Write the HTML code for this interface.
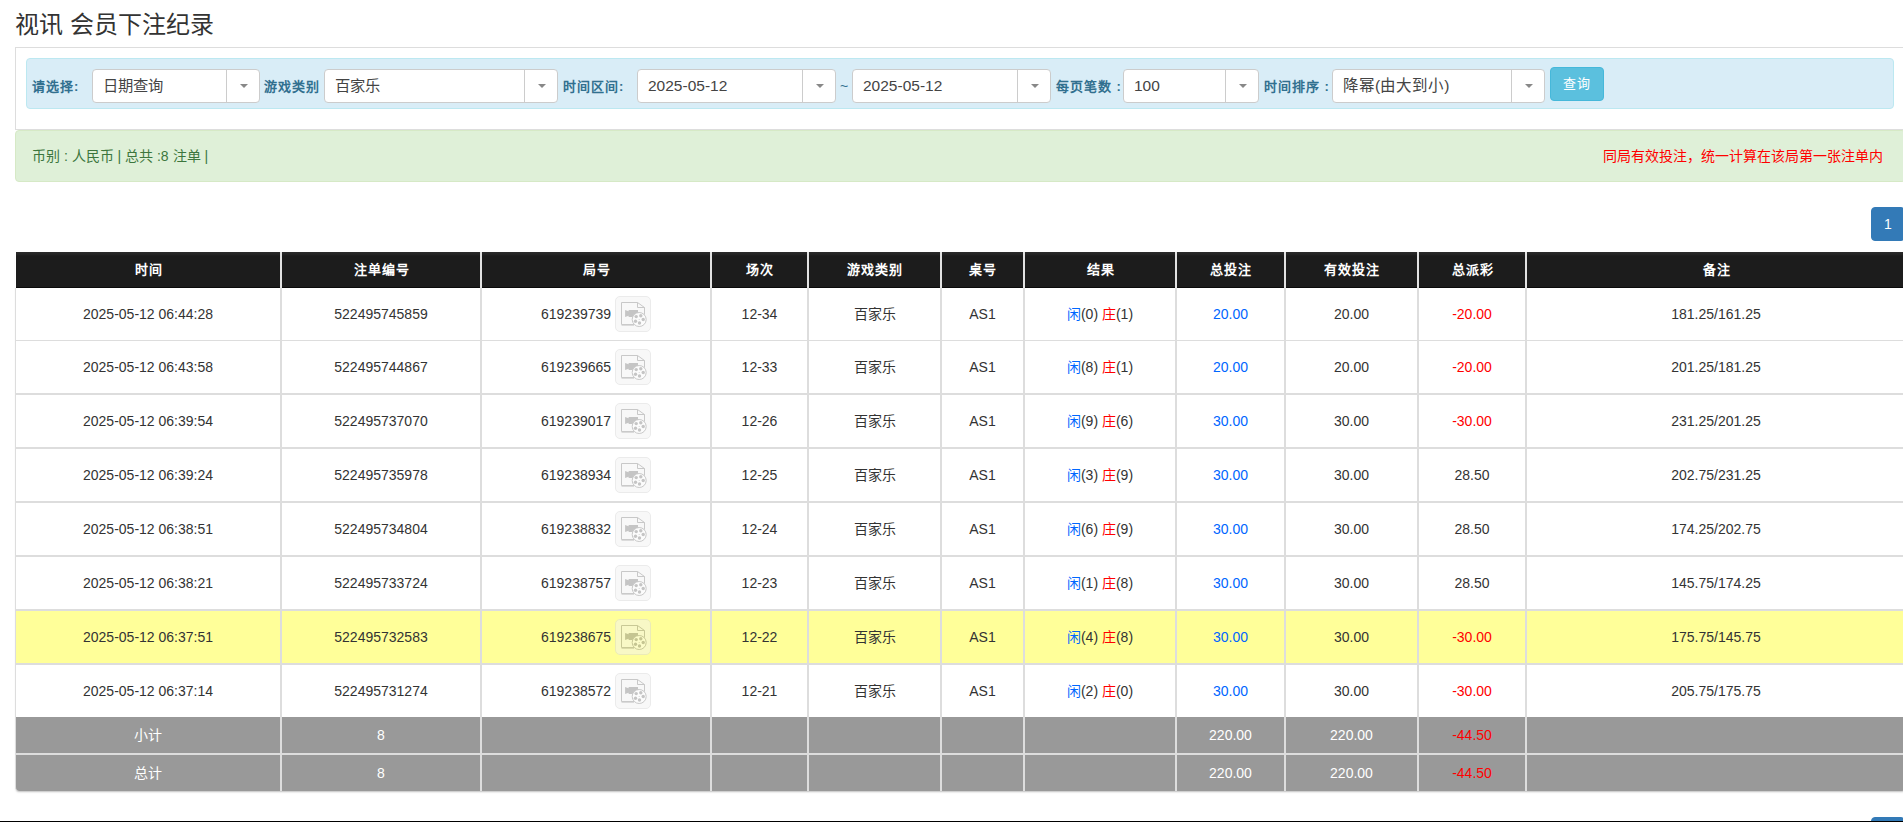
<!DOCTYPE html>
<html lang="zh-CN"><head><meta charset="utf-8"><title>会员下注纪录</title>
<style>
*{box-sizing:border-box;margin:0;padding:0}
html,body{width:1903px;height:822px;overflow:hidden;background:#fff}
body{font-family:"Liberation Sans",sans-serif;font-size:14px;color:#333;position:relative;line-height:20px}
.title{position:absolute;left:15px;top:9px;font-size:24px;line-height:32px;color:#333;font-weight:normal;white-space:nowrap}
.panel{position:absolute;left:15px;top:47px;width:1891px;height:83px;border:1px solid #ddd;background:#fff}
.bar{position:absolute;left:10px;top:10px;width:1868px;height:51px;background:#d9edf7;border:1px solid #bce8f1;border-radius:4px}
.lbl{position:absolute;top:20px;color:#31708f;font-weight:bold;font-size:13px;letter-spacing:1px;line-height:16px;white-space:nowrap}
.sel{position:absolute;top:10px;height:34px;background:#fff;border:1px solid #ccc;border-radius:4px;font-size:15.5px;line-height:32px;color:#444;padding-left:10px;white-space:nowrap}
.sel .sep{position:absolute;right:32px;top:0;bottom:0;width:1px;background:#ccc}
.sel .car{position:absolute;right:11px;top:14px;width:0;height:0;border-style:solid;border-width:4px 4px 0 4px;border-color:#888 transparent transparent transparent}
.tilde{position:absolute;top:17px;color:#31708f;font-size:14px}
.btn{position:absolute;left:1523px;top:8px;width:54px;height:34px;background:#5bc0de;border:1px solid #46b8da;border-radius:4px;color:#fff;font-size:13px;letter-spacing:1px;text-indent:-1px;line-height:31px;text-align:center}
.alert{position:absolute;left:15px;top:130px;width:1891px;height:52px;background:#dff0d8;border:1px solid #d6e9c6;border-radius:4px;color:#3c763d;font-size:14px}
.alert .l{position:absolute;left:16px;top:15px;line-height:20px;white-space:nowrap}
.alert .r{position:absolute;right:22px;top:15px;line-height:20px;color:#f00;white-space:nowrap}
.pg{position:absolute;left:1871px;top:207px;width:34px;height:34px;background:#337ab7;border:1px solid #337ab7;border-radius:4px;color:#fff;text-align:center;line-height:32px;font-size:14px}
.pg2{top:817px}
.botline{position:absolute;left:0;top:821px;width:1903px;height:1px;background:#000}
table.t{position:absolute;left:15px;top:252px;border-collapse:separate;border-spacing:0;table-layout:fixed;width:1891px;border-radius:0 0 4px 4px;box-shadow:0 2px 2px -1px rgba(0,0,0,.25)}
.t th{height:36px;background:linear-gradient(#2b2b2b 0,#262626 2px,#1c1c1c 4px,#1c1c1c 35px,#0a0a0a 35px);color:#fff;font-weight:900;font-size:13px;letter-spacing:1px;text-indent:1px;border-left:1px solid #e2e2e2;border-right:1px solid #e2e2e2;padding:0;text-align:center;line-height:20px}
.t th:first-child{border-left:1px solid #fff}
.t td{text-align:center;padding:0;border-left:1px solid #ddd;border-right:1px solid #ddd;white-space:nowrap;background:#fff}
.t tr.r1 td{height:53px;border-bottom:1px solid #ddd}
.t tr.rn td{height:54px;border-bottom:2px solid #ddd}
.t tr.last td{height:52px;border-bottom:0}
.t tr.hl td{background:#ffff99}
.t tr.g td{background:#999;color:#fff;height:38px;border-bottom:2px solid #ddd}
.t tr.g2 td{height:36px;border-bottom:0}
.t tr.g2 td:first-child{border-bottom-left-radius:4px}
.t tr.g2 td:last-child{border-bottom-right-radius:4px}
.red{color:#f00}
.blue{color:#06f}
.t tr.g td.red{color:#f00}
.vi{display:inline-block;vertical-align:-13px;width:36px;height:36px;border:1px solid #d8d8d8;border-radius:5px;background:#f3f3f3;opacity:.5}
.vi svg{display:block}
</style></head><body>
<h3 class="title">视讯 会员下注纪录</h3>
<div class="panel">
 <div class="bar">
  <span class="lbl" style="left:5px">请选择:</span>
  <div class="sel" style="left:65px;width:168px;font-size:15.3px">日期查询<span class="sep"></span><span class="car"></span></div>
  <span class="lbl" style="left:237px">游戏类别</span>
  <div class="sel" style="left:297px;width:234px;font-size:15.3px">百家乐<span class="sep"></span><span class="car"></span></div>
  <span class="lbl" style="left:536px">时间区间:</span>
  <div class="sel" style="left:610px;width:199px">2025-05-12<span class="sep"></span><span class="car"></span></div>
  <span class="tilde" style="left:813px">~</span>
  <div class="sel" style="left:825px;width:199px">2025-05-12<span class="sep"></span><span class="car"></span></div>
  <span class="lbl" style="left:1029px">每页笔数 :</span>
  <div class="sel" style="left:1096px;width:136px">100<span class="sep"></span><span class="car"></span></div>
  <span class="lbl" style="left:1237px">时间排序 :</span>
  <div class="sel" style="left:1305px;width:213px">降幂(由大到小)<span class="sep"></span><span class="car"></span></div>
  <div class="btn">查询</div>
 </div>
</div>
<div class="alert"><span class="l">币别 : 人民币 | 总共 :8 注单 |</span><span class="r">同局有效投注，统一计算在该局第一张注单内</span></div>
<div class="pg">1</div>
<table class="t">
<colgroup><col style="width:266px"><col style="width:200px"><col style="width:230px"><col style="width:97px"><col style="width:133px"><col style="width:83px"><col style="width:152px"><col style="width:109px"><col style="width:133px"><col style="width:108px"><col style="width:380px"></colgroup>
<thead><tr><th>时间</th><th>注单编号</th><th>局号</th><th>场次</th><th>游戏类别</th><th>桌号</th><th>结果</th><th>总投注</th><th>有效投注</th><th>总派彩</th><th>备注</th></tr></thead>
<tbody>
<tr class="r1"><td>2025-05-12 06:44:28</td><td>522495745859</td><td>619239739 <span class="vi"><svg width="34" height="34" viewBox="0 0 34 34"><path d="M18.3 27.5H5.5V5.5H21.5L28.5 10.5V17.9" fill="none" stroke="#939393" stroke-width="1"/><path d="M5.5 28.3H18" stroke="#aaa" stroke-width="1"/><path d="M21.5 5.5V10.5H28.5" fill="none" stroke="#939393" stroke-width="1"/><path d="M9.1 13L12.6 14.2V13H22V20H12.6V18.8L9.1 20Z" fill="#8d8d8d"/><circle cx="23.2" cy="22.5" r="7" fill="#fafafa" stroke="#939393" stroke-width="1"/><circle cx="20.2" cy="19.6" r="1.7" fill="#8d8d8d"/><circle cx="24.8" cy="18.7" r="1.7" fill="#8d8d8d"/><circle cx="27.2" cy="22.5" r="1.7" fill="#8d8d8d"/><circle cx="19.5" cy="24.2" r="1.7" fill="#8d8d8d"/><circle cx="23.5" cy="26" r="1.7" fill="#8d8d8d"/><circle cx="23.2" cy="22.5" r="0.6" fill="#aaa"/></svg></span></td><td>12-34</td><td>百家乐</td><td>AS1</td><td><span class="blue">闲</span>(0) <span class="red">庄</span>(1)</td><td class="blue">20.00</td><td>20.00</td><td class="red">-20.00</td><td>181.25/161.25</td></tr>
<tr class="rn"><td>2025-05-12 06:43:58</td><td>522495744867</td><td>619239665 <span class="vi"><svg width="34" height="34" viewBox="0 0 34 34"><path d="M18.3 27.5H5.5V5.5H21.5L28.5 10.5V17.9" fill="none" stroke="#939393" stroke-width="1"/><path d="M5.5 28.3H18" stroke="#aaa" stroke-width="1"/><path d="M21.5 5.5V10.5H28.5" fill="none" stroke="#939393" stroke-width="1"/><path d="M9.1 13L12.6 14.2V13H22V20H12.6V18.8L9.1 20Z" fill="#8d8d8d"/><circle cx="23.2" cy="22.5" r="7" fill="#fafafa" stroke="#939393" stroke-width="1"/><circle cx="20.2" cy="19.6" r="1.7" fill="#8d8d8d"/><circle cx="24.8" cy="18.7" r="1.7" fill="#8d8d8d"/><circle cx="27.2" cy="22.5" r="1.7" fill="#8d8d8d"/><circle cx="19.5" cy="24.2" r="1.7" fill="#8d8d8d"/><circle cx="23.5" cy="26" r="1.7" fill="#8d8d8d"/><circle cx="23.2" cy="22.5" r="0.6" fill="#aaa"/></svg></span></td><td>12-33</td><td>百家乐</td><td>AS1</td><td><span class="blue">闲</span>(8) <span class="red">庄</span>(1)</td><td class="blue">20.00</td><td>20.00</td><td class="red">-20.00</td><td>201.25/181.25</td></tr>
<tr class="rn"><td>2025-05-12 06:39:54</td><td>522495737070</td><td>619239017 <span class="vi"><svg width="34" height="34" viewBox="0 0 34 34"><path d="M18.3 27.5H5.5V5.5H21.5L28.5 10.5V17.9" fill="none" stroke="#939393" stroke-width="1"/><path d="M5.5 28.3H18" stroke="#aaa" stroke-width="1"/><path d="M21.5 5.5V10.5H28.5" fill="none" stroke="#939393" stroke-width="1"/><path d="M9.1 13L12.6 14.2V13H22V20H12.6V18.8L9.1 20Z" fill="#8d8d8d"/><circle cx="23.2" cy="22.5" r="7" fill="#fafafa" stroke="#939393" stroke-width="1"/><circle cx="20.2" cy="19.6" r="1.7" fill="#8d8d8d"/><circle cx="24.8" cy="18.7" r="1.7" fill="#8d8d8d"/><circle cx="27.2" cy="22.5" r="1.7" fill="#8d8d8d"/><circle cx="19.5" cy="24.2" r="1.7" fill="#8d8d8d"/><circle cx="23.5" cy="26" r="1.7" fill="#8d8d8d"/><circle cx="23.2" cy="22.5" r="0.6" fill="#aaa"/></svg></span></td><td>12-26</td><td>百家乐</td><td>AS1</td><td><span class="blue">闲</span>(9) <span class="red">庄</span>(6)</td><td class="blue">30.00</td><td>30.00</td><td class="red">-30.00</td><td>231.25/201.25</td></tr>
<tr class="rn"><td>2025-05-12 06:39:24</td><td>522495735978</td><td>619238934 <span class="vi"><svg width="34" height="34" viewBox="0 0 34 34"><path d="M18.3 27.5H5.5V5.5H21.5L28.5 10.5V17.9" fill="none" stroke="#939393" stroke-width="1"/><path d="M5.5 28.3H18" stroke="#aaa" stroke-width="1"/><path d="M21.5 5.5V10.5H28.5" fill="none" stroke="#939393" stroke-width="1"/><path d="M9.1 13L12.6 14.2V13H22V20H12.6V18.8L9.1 20Z" fill="#8d8d8d"/><circle cx="23.2" cy="22.5" r="7" fill="#fafafa" stroke="#939393" stroke-width="1"/><circle cx="20.2" cy="19.6" r="1.7" fill="#8d8d8d"/><circle cx="24.8" cy="18.7" r="1.7" fill="#8d8d8d"/><circle cx="27.2" cy="22.5" r="1.7" fill="#8d8d8d"/><circle cx="19.5" cy="24.2" r="1.7" fill="#8d8d8d"/><circle cx="23.5" cy="26" r="1.7" fill="#8d8d8d"/><circle cx="23.2" cy="22.5" r="0.6" fill="#aaa"/></svg></span></td><td>12-25</td><td>百家乐</td><td>AS1</td><td><span class="blue">闲</span>(3) <span class="red">庄</span>(9)</td><td class="blue">30.00</td><td>30.00</td><td>28.50</td><td>202.75/231.25</td></tr>
<tr class="rn"><td>2025-05-12 06:38:51</td><td>522495734804</td><td>619238832 <span class="vi"><svg width="34" height="34" viewBox="0 0 34 34"><path d="M18.3 27.5H5.5V5.5H21.5L28.5 10.5V17.9" fill="none" stroke="#939393" stroke-width="1"/><path d="M5.5 28.3H18" stroke="#aaa" stroke-width="1"/><path d="M21.5 5.5V10.5H28.5" fill="none" stroke="#939393" stroke-width="1"/><path d="M9.1 13L12.6 14.2V13H22V20H12.6V18.8L9.1 20Z" fill="#8d8d8d"/><circle cx="23.2" cy="22.5" r="7" fill="#fafafa" stroke="#939393" stroke-width="1"/><circle cx="20.2" cy="19.6" r="1.7" fill="#8d8d8d"/><circle cx="24.8" cy="18.7" r="1.7" fill="#8d8d8d"/><circle cx="27.2" cy="22.5" r="1.7" fill="#8d8d8d"/><circle cx="19.5" cy="24.2" r="1.7" fill="#8d8d8d"/><circle cx="23.5" cy="26" r="1.7" fill="#8d8d8d"/><circle cx="23.2" cy="22.5" r="0.6" fill="#aaa"/></svg></span></td><td>12-24</td><td>百家乐</td><td>AS1</td><td><span class="blue">闲</span>(6) <span class="red">庄</span>(9)</td><td class="blue">30.00</td><td>30.00</td><td>28.50</td><td>174.25/202.75</td></tr>
<tr class="rn"><td>2025-05-12 06:38:21</td><td>522495733724</td><td>619238757 <span class="vi"><svg width="34" height="34" viewBox="0 0 34 34"><path d="M18.3 27.5H5.5V5.5H21.5L28.5 10.5V17.9" fill="none" stroke="#939393" stroke-width="1"/><path d="M5.5 28.3H18" stroke="#aaa" stroke-width="1"/><path d="M21.5 5.5V10.5H28.5" fill="none" stroke="#939393" stroke-width="1"/><path d="M9.1 13L12.6 14.2V13H22V20H12.6V18.8L9.1 20Z" fill="#8d8d8d"/><circle cx="23.2" cy="22.5" r="7" fill="#fafafa" stroke="#939393" stroke-width="1"/><circle cx="20.2" cy="19.6" r="1.7" fill="#8d8d8d"/><circle cx="24.8" cy="18.7" r="1.7" fill="#8d8d8d"/><circle cx="27.2" cy="22.5" r="1.7" fill="#8d8d8d"/><circle cx="19.5" cy="24.2" r="1.7" fill="#8d8d8d"/><circle cx="23.5" cy="26" r="1.7" fill="#8d8d8d"/><circle cx="23.2" cy="22.5" r="0.6" fill="#aaa"/></svg></span></td><td>12-23</td><td>百家乐</td><td>AS1</td><td><span class="blue">闲</span>(1) <span class="red">庄</span>(8)</td><td class="blue">30.00</td><td>30.00</td><td>28.50</td><td>145.75/174.25</td></tr>
<tr class="rn hl"><td>2025-05-12 06:37:51</td><td>522495732583</td><td>619238675 <span class="vi"><svg width="34" height="34" viewBox="0 0 34 34"><path d="M18.3 27.5H5.5V5.5H21.5L28.5 10.5V17.9" fill="none" stroke="#939393" stroke-width="1"/><path d="M5.5 28.3H18" stroke="#aaa" stroke-width="1"/><path d="M21.5 5.5V10.5H28.5" fill="none" stroke="#939393" stroke-width="1"/><path d="M9.1 13L12.6 14.2V13H22V20H12.6V18.8L9.1 20Z" fill="#8d8d8d"/><circle cx="23.2" cy="22.5" r="7" fill="#fafafa" stroke="#939393" stroke-width="1"/><circle cx="20.2" cy="19.6" r="1.7" fill="#8d8d8d"/><circle cx="24.8" cy="18.7" r="1.7" fill="#8d8d8d"/><circle cx="27.2" cy="22.5" r="1.7" fill="#8d8d8d"/><circle cx="19.5" cy="24.2" r="1.7" fill="#8d8d8d"/><circle cx="23.5" cy="26" r="1.7" fill="#8d8d8d"/><circle cx="23.2" cy="22.5" r="0.6" fill="#aaa"/></svg></span></td><td>12-22</td><td>百家乐</td><td>AS1</td><td><span class="blue">闲</span>(4) <span class="red">庄</span>(8)</td><td class="blue">30.00</td><td>30.00</td><td class="red">-30.00</td><td>175.75/145.75</td></tr>
<tr class="rn last"><td>2025-05-12 06:37:14</td><td>522495731274</td><td>619238572 <span class="vi"><svg width="34" height="34" viewBox="0 0 34 34"><path d="M18.3 27.5H5.5V5.5H21.5L28.5 10.5V17.9" fill="none" stroke="#939393" stroke-width="1"/><path d="M5.5 28.3H18" stroke="#aaa" stroke-width="1"/><path d="M21.5 5.5V10.5H28.5" fill="none" stroke="#939393" stroke-width="1"/><path d="M9.1 13L12.6 14.2V13H22V20H12.6V18.8L9.1 20Z" fill="#8d8d8d"/><circle cx="23.2" cy="22.5" r="7" fill="#fafafa" stroke="#939393" stroke-width="1"/><circle cx="20.2" cy="19.6" r="1.7" fill="#8d8d8d"/><circle cx="24.8" cy="18.7" r="1.7" fill="#8d8d8d"/><circle cx="27.2" cy="22.5" r="1.7" fill="#8d8d8d"/><circle cx="19.5" cy="24.2" r="1.7" fill="#8d8d8d"/><circle cx="23.5" cy="26" r="1.7" fill="#8d8d8d"/><circle cx="23.2" cy="22.5" r="0.6" fill="#aaa"/></svg></span></td><td>12-21</td><td>百家乐</td><td>AS1</td><td><span class="blue">闲</span>(2) <span class="red">庄</span>(0)</td><td class="blue">30.00</td><td>30.00</td><td class="red">-30.00</td><td>205.75/175.75</td></tr><tr class="g"><td>小计</td><td>8</td><td></td><td></td><td></td><td></td><td></td><td>220.00</td><td>220.00</td><td class="red">-44.50</td><td></td></tr>
<tr class="g g2"><td>总计</td><td>8</td><td></td><td></td><td></td><td></td><td></td><td>220.00</td><td>220.00</td><td class="red">-44.50</td><td></td></tr>
</tbody></table>
<div class="pg pg2">1</div>
<div class="botline"></div>
</body></html>
